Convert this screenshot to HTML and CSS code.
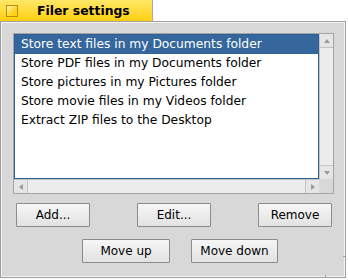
FILE: index.html
```html
<!DOCTYPE html>
<html>
<head>
<meta charset="utf-8">
<link rel="stylesheet" href="styles.css">
</head>
<body>
<div class="tabbar">
  <div class="tab"><span class="tab-box"></span><span class="tab-title">Filer settings</span></div>
</div>
<div class="window">
  <div class="frame">
    <div class="listwrap">
      <div class="viewport">
        <div class="row selected">Store text files in my Documents folder</div>
        <div class="row">Store PDF files in my Documents folder</div>
        <div class="row">Store pictures in my Pictures folder</div>
        <div class="row">Store movie files in my Videos folder</div>
        <div class="row">Extract ZIP files to the Desktop</div>
      </div>
      <div class="vscroll">
        <div class="sbtn"><span class="arrow up"></span></div>
        <div class="strack"></div>
        <div class="sbtn"><span class="arrow down"></span></div>
      </div>
      <div class="hscroll">
        <div class="sbtn"><span class="arrow left"></span></div>
        <div class="strack"></div>
        <div class="sbtn"><span class="arrow right"></span></div>
      </div>
      <div class="corner"></div>
    </div>
    <div class="btnrow1">
      <button class="btn">Add...</button>
      <button class="btn">Edit...</button>
      <button class="btn">Remove</button>
    </div>
    <div class="btnrow2">
      <button class="btn wide">Move up</button>
      <button class="btn wide2">Move down</button>
    </div>
  </div>
  <span class="grip grip-b"></span>
  <span class="grip grip-r"></span>
</div>
</body>
</html>
```
FILE: styles.css
```css
* { box-sizing: border-box; }
html, body { margin: 0; padding: 0; background: #ffffff; }
body {
  width: 348px;
  height: 280px;
  overflow: hidden;
  font-family: "DejaVu Sans", sans-serif;
  font-size: 12px;
  color: #000;
}
.tabbar { height: 21px; display: flex; }
.tab {
  width: 153px;
  height: 21px;
  background: linear-gradient(#ffe868, #ffcf10);
  border-right: 1px solid #a8a8a8;
  display: flex;
  align-items: center;
}
.tab-box {
  width: 12px;
  height: 12px;
  margin-left: 6px;
  border: 1px solid #c08c00;
  background: linear-gradient(135deg, #fff6c8, #ffd21a 60%);
}
.tab-title {
  margin-left: 19px;
  font-weight: bold;
  font-size: 12.4px;
  letter-spacing: 0px;
}
.window {
  position: relative;
  width: 346px;
  height: 257px;
  background: #d6d6d6;
  border: 1px solid #9e9e9e;
  border-top-color: #a0a0a0;
}
.frame {
  height: 100%;
  border: 1px solid #f4f4f4;
  padding: 10px 9px 0 11px;
  background: #d8d8d8;
}
.listwrap {
  width: 321px;
  height: 161px;
  border: 1px solid #a4a4a4;
  display: grid;
  grid-template-columns: 305px 14px;
  grid-template-rows: 145px 14px;
  background: #d8d8d8;
}
.viewport {
  background: #fff;
  border: 1px solid #2c5f96;
  overflow: hidden;
}
.row {
  height: 19px;
  line-height: 19px;
  padding-left: 6px;
  white-space: nowrap;
  font-size: 12.25px;
}
.row.selected { background: #35679c; color: #fff; }
.vscroll {
  display: flex;
  flex-direction: column;
  background: #ececec;
  border-left: 1px solid #c4c4c4;
}
.vscroll .strack { flex: 1; }
.hscroll {
  display: flex;
  background: #ececec;
  border-top: 1px solid #c4c4c4;
}
.hscroll .strack { flex: 1; }
.sbtn {
  width: 14px;
  height: 14px;
  flex: none;
  display: flex;
  align-items: center;
  justify-content: center;
  background: #e6e6e6;
}
.vscroll .sbtn { width: 13px; }
.vscroll .sbtn:first-child { border-bottom: 1px solid #c4c4c4; }
.vscroll .sbtn:last-child { border-top: 1px solid #c4c4c4; }
.hscroll .sbtn { height: 13px; }
.hscroll .sbtn:first-child { border-right: 1px solid #c4c4c4; }
.hscroll .sbtn:last-child { border-left: 1px solid #c4c4c4; }
.corner { background: #d8d8d8; }
.arrow { width: 0; height: 0; border: 3px solid transparent; }
.arrow.up { border-bottom: 4px solid #9a9a9a; border-top-width: 0; }
.arrow.down { border-top: 4px solid #9a9a9a; border-bottom-width: 0; }
.arrow.left { border-right: 4px solid #9a9a9a; border-left-width: 0; }
.arrow.right { border-left: 4px solid #9a9a9a; border-right-width: 0; }
.btn {
  font-family: "DejaVu Sans", sans-serif;
  font-size: 12px;
  color: #000;
  width: 74px;
  height: 24px;
  padding: 0;
  margin: 0;
  border: 1px solid #8c8c8c;
  border-radius: 1px;
  background: linear-gradient(#f6f6f6, #e2e2e2);
}
.btnrow1 {
  display: flex;
  justify-content: space-between;
  width: 316px;
  margin: 9px 0 0 3px;
}
.btnrow2 {
  display: flex;
  gap: 21px;
  margin: 12px 0 0 69px;
}
.btn.wide { width: 88px; }
.btn.wide2 { width: 87px; }
.grip { position: absolute; background: #9e9e9e; }
.grip-b { left: 324px; bottom: -1px; width: 1px; height: 3px; }
.grip-r { right: -1px; top: 234px; width: 3px; height: 1px; }
```
